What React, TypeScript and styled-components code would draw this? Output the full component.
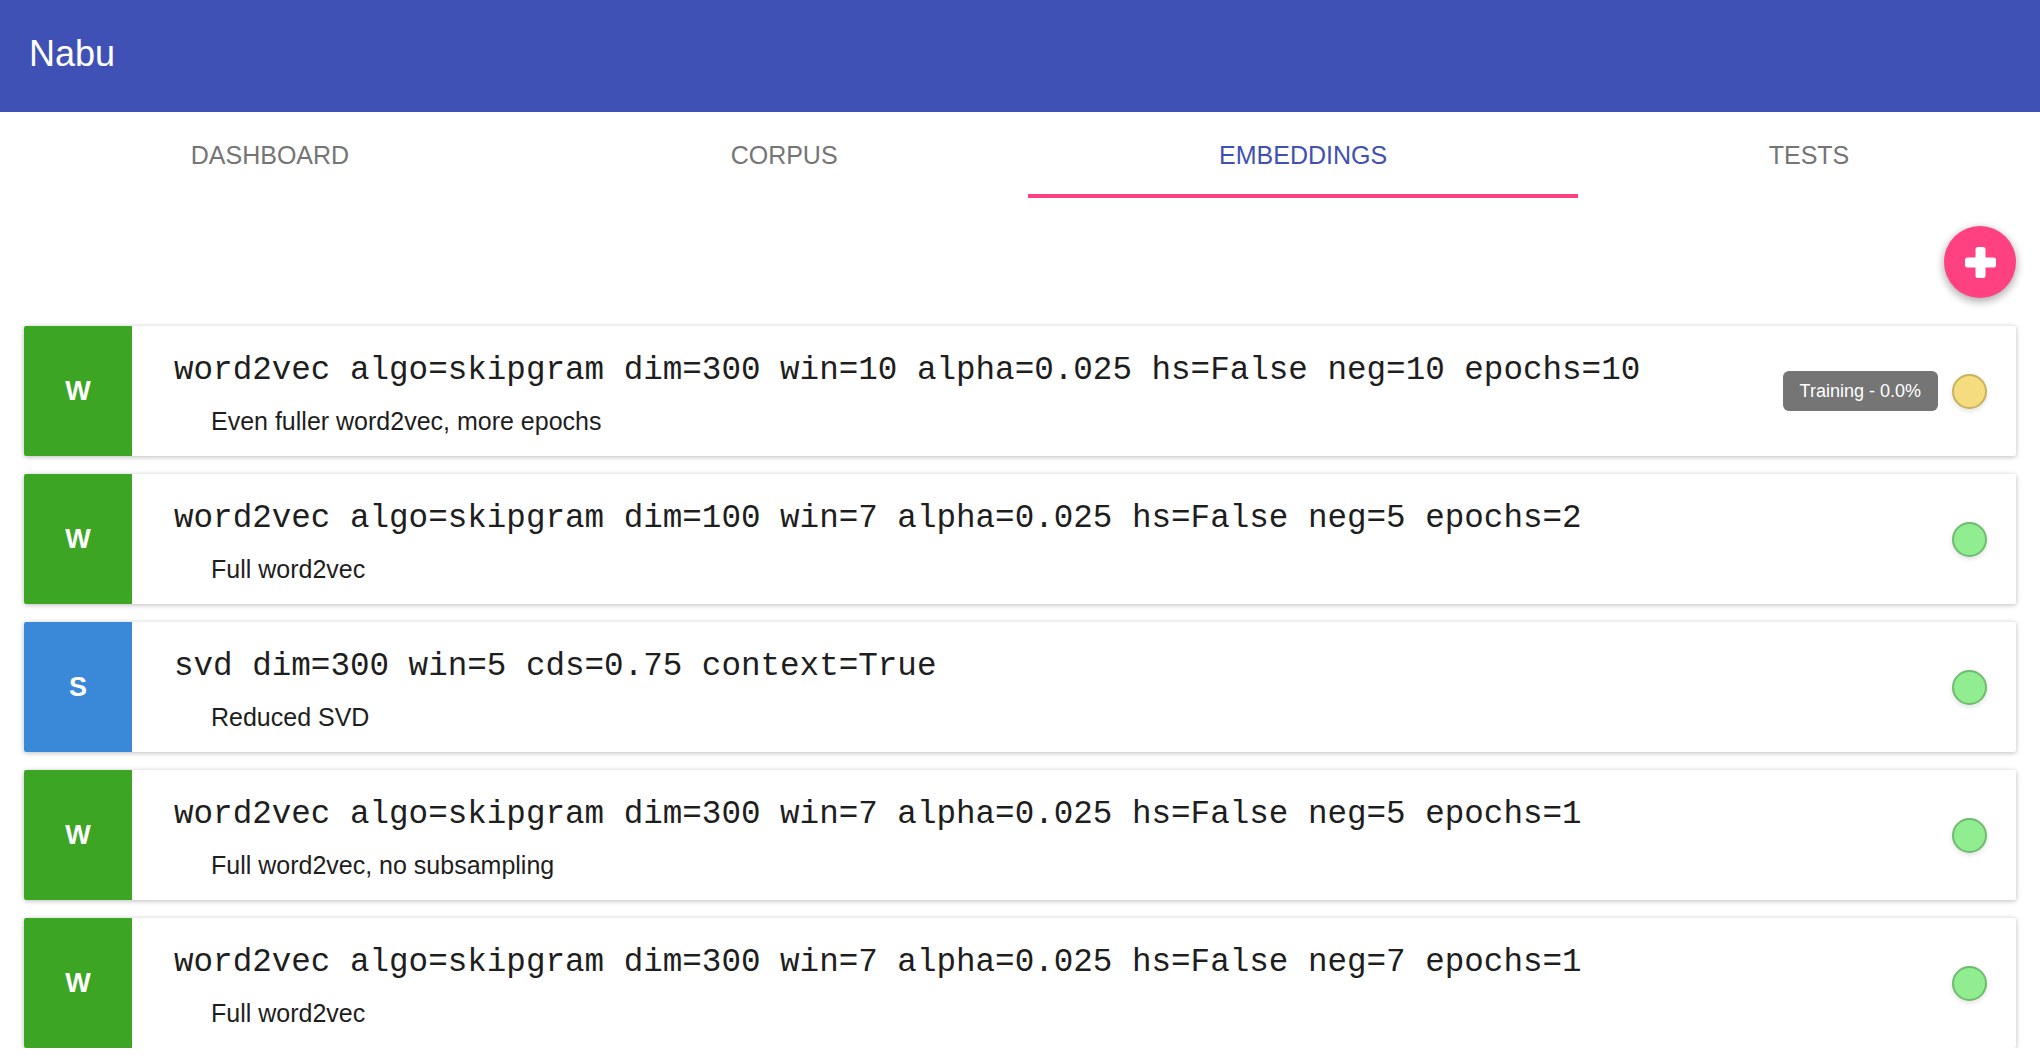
import React from "react";
import styled, { createGlobalStyle } from "styled-components";

const Color = {
  INDIGO: "#3f51b5",
  PINK: "#ff4081",
  GRAY: "#757575",
  TEXT: "#1e1e1e",
  GREEN: "#3ca524",
  BLUE: "#3a89d9",
};

type Status = "training" | "done";

interface Embedding {
  letter: string;
  kind: "w" | "s";
  title: string;
  description: string;
  status: Status;
  progress?: string;
}

const EMBEDDINGS: Embedding[] = [
  {
    letter: "W",
    kind: "w",
    title: "word2vec algo=skipgram dim=300 win=10 alpha=0.025 hs=False neg=10 epochs=10",
    description: "Even fuller word2vec, more epochs",
    status: "training",
    progress: "Training - 0.0%",
  },
  {
    letter: "W",
    kind: "w",
    title: "word2vec algo=skipgram dim=100 win=7 alpha=0.025 hs=False neg=5 epochs=2",
    description: "Full word2vec",
    status: "done",
  },
  {
    letter: "S",
    kind: "s",
    title: "svd dim=300 win=5 cds=0.75 context=True",
    description: "Reduced SVD",
    status: "done",
  },
  {
    letter: "W",
    kind: "w",
    title: "word2vec algo=skipgram dim=300 win=7 alpha=0.025 hs=False neg=5 epochs=1",
    description: "Full word2vec, no subsampling",
    status: "done",
  },
  {
    letter: "W",
    kind: "w",
    title: "word2vec algo=skipgram dim=300 win=7 alpha=0.025 hs=False neg=7 epochs=1",
    description: "Full word2vec",
    status: "done",
  },
];

const TABS = ["Dashboard", "Corpus", "Embeddings", "Tests"];

const GlobalStyle = createGlobalStyle`
  html, body {
    margin: 0;
    padding: 0;
    background: #ffffff;
    font-family: "Liberation Sans", Arial, sans-serif;
  }
`;

const PlusIcon = () => (
  <svg width="31" height="31" viewBox="0 0 31 31">
    <rect x="10.5" y="0" width="10" height="31" rx="2.5" fill="#fff" />
    <rect x="0" y="10.5" width="31" height="10" rx="2.5" fill="#fff" />
  </svg>
);

const EmbeddingItem = ({ item }: { item: Embedding }) => (
  <Card>
    <Avatar kind={item.kind}>{item.letter}</Avatar>
    <CardBody>
      <Title>{item.title}</Title>
      <Description>{item.description}</Description>
    </CardBody>
    <CardStatus>
      {item.progress && <Badge>{item.progress}</Badge>}
      <StatusDot status={item.status} />
    </CardStatus>
  </Card>
);

export default function App() {
  return (
    <Page>
      <GlobalStyle />
      <AppBar>
        <AppTitle>Nabu</AppTitle>
      </AppBar>
      <TabBar>
        {TABS.map((tab) => (
          <Tab key={tab} active={tab === "Embeddings"}>
            {tab}
          </Tab>
        ))}
      </TabBar>
      <Actions>
        <Fab aria-label="add">
          <PlusIcon />
        </Fab>
      </Actions>
      <List>
        {EMBEDDINGS.map((item, i) => (
          <EmbeddingItem key={i} item={item} />
        ))}
      </List>
    </Page>
  );
}

const Page = styled.div`
  width: 2040px;
`;

const AppBar = styled.header`
  height: 112px;
  background: ${Color.INDIGO};
  display: flex;
  align-items: center;
  padding-left: 29px;
  box-sizing: border-box;
`;

const AppTitle = styled.h1`
  margin: 0 0 4px;
  color: #fff;
  font-size: 36px;
  font-weight: 400;
`;

const TabBar = styled.nav`
  display: flex;
  height: 86px;
`;

const Tab = styled.div<{ active?: boolean }>`
  flex: 1 1 auto;
  position: relative;
  display: flex;
  align-items: center;
  justify-content: center;
  text-transform: uppercase;
  font-size: 25px;
  color: ${(p) => (p.active ? Color.INDIGO : Color.GRAY)};
  cursor: pointer;

  &::after {
    content: "";
    display: ${(p) => (p.active ? "block" : "none")};
    position: absolute;
    left: 0;
    right: 0;
    bottom: 0;
    height: 4px;
    background: ${Color.PINK};
  }
`;

const Actions = styled.div`
  display: flex;
  justify-content: flex-end;
  padding: 28px 24px 28px 0;
`;

const Fab = styled.button`
  width: 72px;
  height: 72px;
  border-radius: 50%;
  border: none;
  padding: 0;
  background: ${Color.PINK};
  display: flex;
  align-items: center;
  justify-content: center;
  box-shadow: 0 3px 10px rgba(0, 0, 0, 0.16), 0 3px 10px rgba(0, 0, 0, 0.23);
  cursor: pointer;
`;

const List = styled.div`
  display: flex;
  flex-direction: column;
  gap: 18px;
  padding: 0 24px;
`;

const Card = styled.div`
  display: flex;
  height: 130px;
  background: #fff;
  border-radius: 2px;
  box-shadow: 0 1px 6px rgba(0, 0, 0, 0.12), 0 1px 4px rgba(0, 0, 0, 0.16);
  overflow: hidden;
`;

const Avatar = styled.div<{ kind: "w" | "s" }>`
  width: 108px;
  flex-shrink: 0;
  background: ${(p) => (p.kind === "s" ? Color.BLUE : Color.GREEN)};
  color: #fff;
  font-size: 27px;
  font-weight: 700;
  display: flex;
  align-items: center;
  justify-content: center;
`;

const CardBody = styled.div`
  flex: 1;
  display: flex;
  flex-direction: column;
  justify-content: center;
  gap: 18px;
  padding: 5px 0 0 42px;
`;

const Title = styled.div`
  font-family: "Liberation Mono", "Courier New", monospace;
  font-size: 32.6px;
  line-height: 36px;
  color: ${Color.TEXT};
  white-space: nowrap;
`;

const Description = styled.div`
  font-size: 25px;
  line-height: 28px;
  color: ${Color.TEXT};
  padding-left: 37px;
`;

const CardStatus = styled.div`
  display: flex;
  align-items: center;
  gap: 14px;
  padding-right: 29px;
`;

const Badge = styled.span`
  background: ${Color.GRAY};
  color: #fff;
  font-size: 18px;
  line-height: 40px;
  padding: 0 17px;
  border-radius: 6px;
`;

const StatusDot = styled.span<{ status: Status }>`
  width: 35px;
  height: 35px;
  box-sizing: border-box;
  border-radius: 50%;
  background: ${(p) => (p.status === "training" ? "#f5dd7f" : "#90ee90")};
  border: 2px solid ${(p) => (p.status === "training" ? "#c9b15e" : "#6fbb6f")};
  box-shadow: 0 2px 5px rgba(0, 0, 0, 0.12);
`;
